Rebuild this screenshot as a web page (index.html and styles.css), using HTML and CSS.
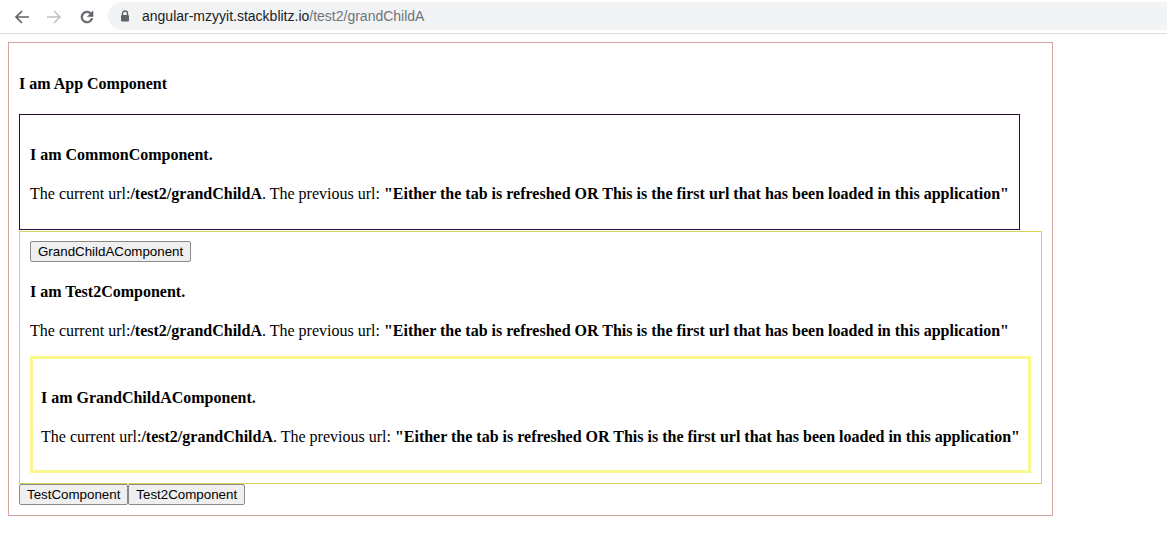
FILE: index.html
```html
<!DOCTYPE html>
<html>
<head>
<meta charset="utf-8">
<link rel="stylesheet" href="styles.css">
</head>
<body>
<div class="toolbar">
  <div class="nav">
    <svg class="nav-icon" width="16" height="16" viewBox="0 0 16 16"><path d="M15 8H2.5M8 2L2 8l6 6" fill="none" stroke="#5f6368" stroke-width="1.7"/></svg>
    <svg class="nav-icon" width="16" height="16" viewBox="0 0 16 16"><path d="M1 8h12.5M8 2l6 6-6 6" fill="none" stroke="#c4c0c0" stroke-width="1.5"/></svg>
    <svg class="nav-icon" width="18" height="18" viewBox="0 0 24 24"><path d="M17.65 6.35A7.96 7.96 0 0 0 12 4a8 8 0 1 0 7.73 10h-2.3A5.8 5.8 0 1 1 12 6.2c1.6 0 3.04.66 4.1 1.7L12.6 11.4H20V4l-2.35 2.35z" fill="#5f6368" stroke="#5f6368" stroke-width="0.8"/></svg>
  </div>
  <div class="omnibox">
    <svg class="lock" width="10" height="12" viewBox="0 0 10 12"><path d="M2.5 5V3.5a2.5 2.5 0 0 1 5 0V5" fill="none" stroke="#5f6368" stroke-width="1.4"/><rect x="1" y="5" width="8" height="6.5" rx="1" fill="#5f6368"/></svg>
    <span class="host">angular-mzyyit.stackblitz.io</span><span class="path">/test2/grandChildA</span>
  </div>
</div>
<div class="page">
  <div class="app-box">
    <h4 class="title">I am App Component</h4>
    <div class="common-box">
      <h4 class="title">I am CommonComponent.</h4>
      <p class="url-line">The current url:<b>/test2/grandChildA</b>. The previous url: <b>"Either the tab is refreshed OR This is the first url that has been loaded in this application"</b></p>
    </div>
    <div class="test2-box">
      <div class="btn-row"><button class="btn">GrandChildAComponent</button></div>
      <h4 class="title">I am Test2Component.</h4>
      <p class="url-line">The current url:<b>/test2/grandChildA</b>. The previous url: <b>"Either the tab is refreshed OR This is the first url that has been loaded in this application"</b></p>
      <div class="grandchild-box">
        <h4 class="title">I am GrandChildAComponent.</h4>
        <p class="url-line">The current url:<b>/test2/grandChildA</b>. The previous url: <b>"Either the tab is refreshed OR This is the first url that has been loaded in this application"</b></p>
      </div>
    </div>
    <div class="btn-row"><button class="btn">TestComponent</button><button class="btn">Test2Component</button></div>
  </div>
</div>
</body>
</html>
```
FILE: styles.css
```css
html, body {
  margin: 0;
  padding: 0;
  background: #fff;
}
body {
  font-family: "Liberation Serif", "Times New Roman", serif;
  font-size: 16px;
  color: #000;
}
.toolbar {
  height: 33px;
  border-bottom: 1px solid #dcdcdc;
  display: flex;
  align-items: center;
  background: #fff;
}
.nav {
  display: flex;
  align-items: center;
  gap: 16px;
  padding-left: 14px;
  width: 94px;
}
.nav-icon {
  display: block;
}
.omnibox {
  flex: 1;
  height: 28px;
  margin-top: -1px;
  background: #f1f3f4;
  border-radius: 14px 0 0 14px;
  display: flex;
  align-items: center;
  padding-left: 12px;
  font-family: "Liberation Sans", Arial, sans-serif;
  font-size: 14px;
}
.lock {
  margin-right: 12px;
}
.host {
  color: #202124;
}
.path {
  color: #6f7377;
}
.page {
  padding: 8px;
}
.app-box {
  width: 1023px;
  border: 1px solid #d6a3a3;
  padding: 0 10px 10px;
}
.app-box > .title {
  margin-top: 32px;
}
.title {
  font-size: 16px;
  font-weight: bold;
  margin: 21px 0;
}
.url-line {
  margin: 16px 0;
  white-space: nowrap;
}
.common-box {
  width: fit-content;
  border: 1px solid #2a0c2e;
  padding: 10px;
  margin-bottom: 1px;
}
.test2-box {
  border: 1px solid #d3d25c;
  padding: 10px;
}
.test2-box > .btn-row {
  margin-top: -1px;
}
.grandchild-box {
  width: fit-content;
  border: 3px solid #f8f88c;
  padding: 9px 8px 8px;
}
.btn-row {
  display: flex;
}
.btn {
  font-family: "Liberation Sans", Arial, sans-serif;
  font-size: 13.333px;
  color: #000;
  background: #efefef;
  border: 1px solid #8a8a8a;
  border-radius: 2px;
  padding: 2px 7px 2px;
  line-height: 15px;
  margin: 0;
}
```
